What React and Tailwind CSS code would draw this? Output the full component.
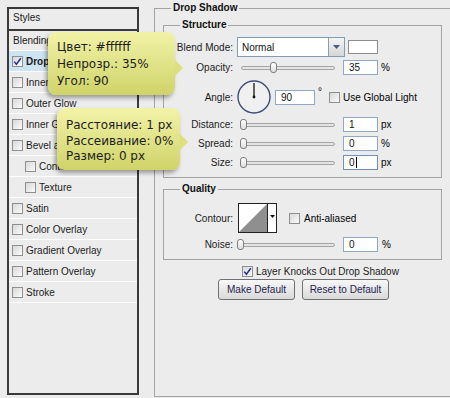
import React from 'react';

const STYLE_ROWS = [
  { label: 'Drop Shadow', checked: true, active: true },
  { label: 'Inner Shadow' },
  { label: 'Outer Glow' },
  { label: 'Inner Glow' },
  { label: 'Bevel and Emboss' },
  { label: 'Contour', indent: true },
  { label: 'Texture', indent: true },
  { label: 'Satin' },
  { label: 'Color Overlay' },
  { label: 'Gradient Overlay' },
  { label: 'Pattern Overlay' },
  { label: 'Stroke' },
];

function Check({ checked }) {
  return (
    <span className="flex h-[11px] w-[11px] shrink-0 items-center justify-center border border-[#8e8f8f] bg-gradient-to-br from-[#d8d8d8] to-[#fbfbfb]">
      {checked && (
        <svg width="9" height="9" viewBox="0 0 9 9">
          <path d="M1.3 4.6 L3.4 7.3 L7.8 1.2" stroke="#24318c" strokeWidth="1.5" fill="none" />
        </svg>
      )}
    </span>
  );
}

function Slider({ w, pos }) {
  return (
    <div className="relative flex h-[11px] shrink-0 items-center" style={{ width: w }}>
      <div className="h-[4px] w-full rounded-full border border-[#a4a4a4] bg-[#e4e4e4]" />
      <div
        className="absolute top-0 h-[11px] w-[7px] rounded-[3px] border border-[#7d7d7d] bg-gradient-to-b from-white to-[#dedede]"
        style={{ left: pos }}
      />
    </div>
  );
}

function Field({ value, w = 35, caret }) {
  return (
    <div
      className={`flex h-[15px] shrink-0 items-center border bg-white pl-[5px] text-[10px] text-[#111] ${caret ? 'border-[#6f8fb8]' : 'border-[#8fa8c8]'}`}
      style={{ width: w }}
    >
      {value}
      {caret && <span className="ml-[1px] h-[11px] w-[1px] bg-black" />}
    </div>
  );
}

function Label({ children }) {
  return <span className="w-[69px] shrink-0 text-right text-[10px] text-[#1b1b1b]">{children}</span>;
}

function Group({ title, className, children }) {
  return (
    <div className={`relative border border-[#a3a3a3] ${className}`}>
      <span className="absolute -top-[7px] left-[16px] bg-[#ececec] px-[2px] text-[10px] font-bold leading-[12px] text-[#111]">
        {title}
      </span>
      {children}
    </div>
  );
}

// yellow callout bubble with a pointer on the right
function Tip({ lines, className, boxClass, arrowClass }) {
  return (
    <div className={`absolute flex items-start ${className}`}>
      <div className={`rounded-[8px] bg-gradient-to-b from-[#f2f3a8] to-[#d0d368] pl-[9px] text-[12px] text-[#1d1d1d] shadow-[-2px_3px_4px_rgba(0,0,0,0.35)] font-['DejaVu_Sans',sans-serif] ${boxClass}`}>
        {lines.map((l) => (
          <div key={l} className="whitespace-nowrap">{l}</div>
        ))}
      </div>
      <div className={`h-[16px] w-[8px] bg-[#dee07e] [clip-path:polygon(0_0,100%_50%,0_100%)] ${arrowClass}`} />
    </div>
  );
}

export default function App() {
  return (
    <div className="relative flex h-[398px] w-[450px] items-start overflow-hidden bg-[#ececec] font-['Liberation_Sans',Arial,sans-serif]">
      {/* styles list */}
      <div className="ml-[7px] mt-[7px] h-[388px] w-[132px] shrink-0 border-2 border-[#3a3a3a] text-[10px] text-[#1b1b1b]">
        <div className="flex h-[22px] items-center border-b-2 border-[#3a3a3a] pb-[3px] pl-[4px]">Styles</div>
        <div className="flex h-[20px] items-center whitespace-nowrap border-b border-white pl-[4px]">
          Blending Options: Default
        </div>
        {STYLE_ROWS.map((r) => (
          <div
            key={r.label}
            className={`flex h-[21px] items-center gap-[3px] whitespace-nowrap border-b border-white ${r.indent ? 'pl-[16px]' : 'pl-[3px]'} ${r.active ? 'bg-[#cfe4f3] font-bold' : ''}`}
          >
            <Check checked={r.checked} />
            {r.label}
          </div>
        ))}
      </div>

      {/* drop shadow panel */}
      <div className="relative ml-[15px] mt-[8px] h-[389px] w-[310px] shrink-0 border-y border-l border-[#a3a3a3]">
        <span className="absolute -top-[7px] left-[16px] bg-[#ececec] px-[2px] text-[10px] font-bold leading-[12px] text-[#111]">
          Drop Shadow
        </span>
        <div className="ml-[8px] mt-[16px] flex flex-col">
          <Group title="Structure" className="h-[153px] w-[279px]">
            <div className="flex flex-col">
              <div className="mt-[11px] flex h-[20px] items-center">
                <Label>Blend Mode:</Label>
                <div className="ml-[4px] flex h-[20px] w-[108px] items-center border border-[#7f9db9] bg-white">
                  <span className="flex-1 pl-[4px] text-[10px] text-[#111]">Normal</span>
                  <div className="flex h-full w-[16px] items-center justify-center border-l border-[#8b9bb3] bg-gradient-to-b from-[#f4f4f4] to-[#d6d6d6]">
                    <svg width="7" height="4" viewBox="0 0 7 4">
                      <path d="M0 0 H7 L3.5 4 Z" fill="#4a5a80" />
                    </svg>
                  </div>
                </div>
                <div className="ml-[3px] h-[14px] w-[30px] border border-[#8c8c8c] bg-white" />
              </div>

              <div className="mt-[3px] flex h-[15px] items-center">
                <Label>Opacity:</Label>
                <div className="ml-[8px]">
                  <Slider w={94} pos={29} />
                </div>
                <div className="ml-[8px]">
                  <Field value="35" />
                </div>
                <span className="ml-[3px] text-[10px]">%</span>
              </div>

              <div className="mt-[5px] flex h-[34px] items-center">
                <Label>Angle:</Label>
                <svg className="ml-[4px] shrink-0" width="34" height="34" viewBox="0 0 34 34">
                  <circle cx="17" cy="17" r="16" fill="#f0f0f0" stroke="#3d4b7a" strokeWidth="1.4" />
                  <line x1="17" y1="17" x2="17" y2="3" stroke="#111" strokeWidth="1.3" />
                  <circle cx="17" cy="17" r="1.4" fill="#111" />
                </svg>
                <div className="ml-[4px]">
                  <Field value="90" w={40} />
                </div>
                <span className="ml-[3px] self-start pt-[7px] text-[10px] leading-[10px]">°</span>
                <div className="ml-[7px] flex items-center gap-[3px] text-[10px]">
                  <Check />
                  Use Global Light
                </div>
              </div>

              <div className="mt-[3px] flex h-[15px] items-center">
                <Label>Distance:</Label>
                <div className="ml-[7px]">
                  <Slider w={95} pos={0} />
                </div>
                <div className="ml-[8px]">
                  <Field value="1" />
                </div>
                <span className="ml-[3px] text-[10px]">px</span>
              </div>

              <div className="mt-[4px] flex h-[15px] items-center">
                <Label>Spread:</Label>
                <div className="ml-[7px]">
                  <Slider w={95} pos={0} />
                </div>
                <div className="ml-[8px]">
                  <Field value="0" />
                </div>
                <span className="ml-[3px] text-[10px]">%</span>
              </div>

              <div className="mt-[4px] flex h-[15px] items-center">
                <Label>Size:</Label>
                <div className="ml-[7px]">
                  <Slider w={95} pos={0} />
                </div>
                <div className="ml-[8px]">
                  <Field value="0" caret />
                </div>
                <span className="ml-[3px] text-[10px]">px</span>
              </div>
            </div>
          </Group>

          <Group title="Quality" className="mt-[11px] h-[71px] w-[279px]">
            <div className="flex flex-col">
              <div className="mt-[13px] flex h-[30px] items-center">
                <Label>Contour:</Label>
                <div className="ml-[5px] flex h-[30px] w-[39px] border border-[#222] bg-white">
                  <svg width="28" height="28" viewBox="0 0 28 28">
                    <polygon points="0,28 28,0 28,28" fill="#8f8f8f" />
                  </svg>
                  <div className="flex w-[9px] items-start justify-center border-l border-[#222] pt-[11px]">
                    <svg width="5" height="3" viewBox="0 0 5 3">
                      <path d="M0 0 H5 L2.5 3 Z" fill="#111" />
                    </svg>
                  </div>
                </div>
                <div className="ml-[12px] flex items-center gap-[4px] text-[10px]">
                  <Check />
                  Anti-aliased
                </div>
              </div>
              <div className="mt-[4px] flex h-[15px] items-center">
                <Label>Noise:</Label>
                <div className="ml-[4px]">
                  <Slider w={98} pos={0} />
                </div>
                <div className="ml-[8px]">
                  <Field value="0" />
                </div>
                <span className="ml-[4px] text-[10px]">%</span>
              </div>
            </div>
          </Group>

          <div className="mt-[5px] flex h-[12px] items-center gap-[3px] pl-[79px] text-[10px] text-[#1b1b1b]">
            <Check checked />
            Layer Knocks Out Drop Shadow
          </div>
          <div className="mt-[2px] flex h-[21px] gap-[7px] pl-[55px]">
            <button className="w-[77px] rounded-[3px] border border-[#707070] bg-gradient-to-b from-[#f7f7f7] to-[#dadada] text-[10px] text-[#1f2350]">
              Make Default
            </button>
            <button className="w-[87px] rounded-[3px] border border-[#707070] bg-gradient-to-b from-[#f7f7f7] to-[#dadada] text-[10px] text-[#1f2350]">
              Reset to Default
            </button>
          </div>
        </div>
      </div>

      <Tip
        className="left-[48px] top-[32px]"
        boxClass="h-[63px] w-[127px] pt-[7px] leading-[17px]"
        arrowClass="mt-[28px]"
        lines={['Цвет: #ffffff', 'Непрозр.: 35%', 'Угол: 90']}
      />
      <Tip
        className="left-[57px] top-[108px]"
        boxClass="h-[62px] w-[123px] pt-[10px] leading-[15.5px]"
        arrowClass="mt-[26px]"
        lines={['Расстояние: 1 px', 'Рассеивание: 0%', 'Размер: 0 px']}
      />
    </div>
  );
}
